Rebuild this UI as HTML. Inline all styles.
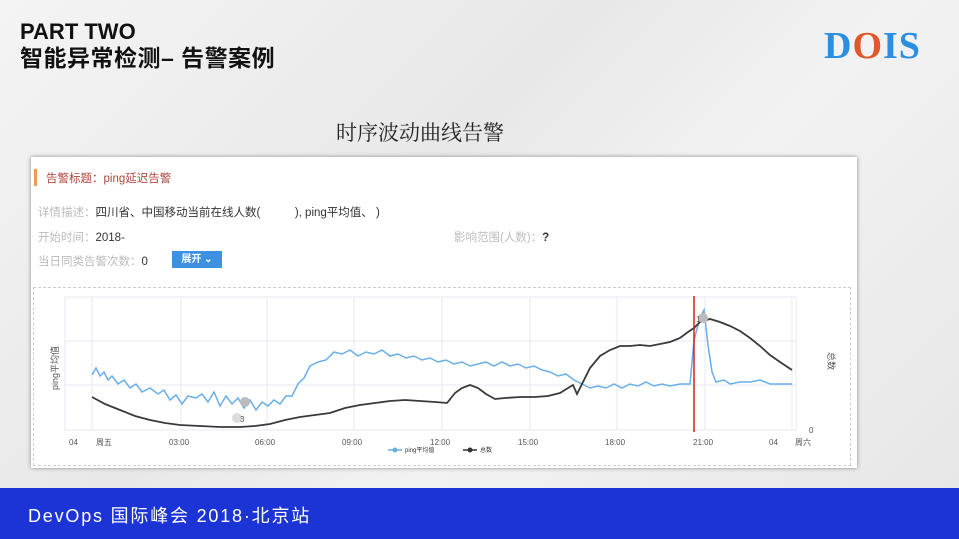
<html><head><style>
body{margin:0;width:959px;height:539px;overflow:hidden;background:linear-gradient(135deg,#f4f4f4,#e8e8e8 40%,#f2f2f2 60%,#e6e6e6);font-family:"Liberation Sans","Noto Sans CJK SC",sans-serif;position:relative}
.a{position:absolute}
</style></head><body>
<div class="a" style="left:20px;top:19px;font-size:22px;font-weight:bold;color:#111;line-height:26px">PART TWO<br><span style="font-size:23px;letter-spacing:0.5px">智能异常检测– 告警案例</span></div>
<div class="a" style="left:824px;top:24px;font-size:38px;font-weight:900;font-family:'Liberation Serif',serif;color:#2b8ee0;line-height:44px;letter-spacing:1px">D<span style="color:#e0572c">O</span>IS</div>
<div class="a" style="left:336px;top:117px;font-size:21px;color:#222;font-family:'Liberation Serif','Noto Serif CJK SC',serif">时序波动曲线告警</div>
<div class="a" style="left:31px;top:157px;width:826px;height:311px;background:#fff;box-shadow:0 0 4px #888">
<div class="a" style="left:3px;top:12px;width:3px;height:17px;background:#f29a4a"></div>
<div class="a" style="left:15px;top:13px;font-size:11.5px;color:#b0453c">告警标题：ping延迟告警</div>
<div class="a" style="left:7px;top:47px;font-size:11.5px;color:#bbb">详情描述：<span style="color:#333">四川省、中国移动当前在线人数(　　　), ping平均值、 )</span></div>
<div class="a" style="left:7px;top:72px;font-size:11.5px;color:#bbb">开始时间：<span style="color:#333">2018-</span></div>
<div class="a" style="left:423px;top:72px;font-size:11.5px;color:#bbb">影响范围(人数)：<span style="color:#333;font-weight:bold">?</span></div>
<div class="a" style="left:7px;top:96px;font-size:11.5px;color:#bbb">当日同类告警次数：<span style="color:#333">0</span></div>
<div class="a" style="left:141px;top:94px;width:50px;height:17px;background:#3e91e0;color:#fff;font-size:10px;line-height:17px;text-align:center;font-weight:bold">展开 ⌄</div>
<div class="a" style="left:2px;top:130px;width:816px;height:177px;border:1px dashed #ccc"></div>
</div>
<svg class="a" style="left:0;top:0" width="959" height="539">
<g stroke="#e4e8f0" stroke-width="1" fill="none">
<rect x="65" y="297" width="731" height="133"/>
<line x1="65" y1="341" x2="796" y2="341"/><line x1="65" y1="385" x2="796" y2="385"/>
<line x1="181" y1="297" x2="181" y2="430"/><line x1="267" y1="297" x2="267" y2="430"/><line x1="354" y1="297" x2="354" y2="430"/><line x1="442" y1="297" x2="442" y2="430"/><line x1="530" y1="297" x2="530" y2="430"/><line x1="617" y1="297" x2="617" y2="430"/><line x1="705" y1="297" x2="705" y2="430"/><line x1="92" y1="297" x2="92" y2="430"/><line x1="792" y1="297" x2="792" y2="430"/>
</g>
<polyline fill="none" stroke="#6aaee8" stroke-width="1.5" points="92,375 96,368 100,376 104,372 108,380 112,376 118,384 124,380 130,388 136,384 142,392 150,388 158,394 164,390 170,400 176,395 182,404 188,396 196,398 202,394 208,402 214,392 220,406 226,396 232,404 238,398 244,408 250,400 256,410 262,402 268,406 274,400 280,404 286,396 292,396 298,384 304,378 310,366 318,362 326,360 334,352 342,354 350,350 358,356 366,352 374,354 382,350 390,356 398,354 406,358 414,356 422,360 430,358 438,362 446,360 454,364 462,362 470,366 478,364 486,362 494,366 502,362 510,366 518,364 526,368 534,366 542,370 550,372 558,376 566,374 574,380 582,384 590,388 598,386 606,388 614,384 622,388 630,384 638,386 646,382 654,386 662,384 670,386 680,384 690,384 694,340 700,318 704,310 708,345 712,372 716,382 724,380 730,384 740,382 750,382 760,380 770,384 780,384 792,384"/>
<polyline fill="none" stroke="#3a3a3a" stroke-width="1.8" points="92,397 105,404 120,410 135,416 150,420 165,423 180,425 200,426 220,427 240,427 255,426 270,424 285,420 300,417 315,415 330,413 345,408 360,405 375,403 390,401 405,400 420,401 435,402 447,403 455,393 462,388 470,385 478,388 486,394 495,399 505,398 520,397 535,397 548,396 560,393 568,388 573,385 577,394 582,384 590,368 600,356 610,350 620,346 630,346 640,345 650,346 660,344 670,342 680,338 688,332 694,328 700,322 710,319 720,322 730,326 740,331 750,338 760,346 770,355 780,362 792,370"/>
<line x1="694" y1="296" x2="694" y2="432" stroke="#e01a1a" stroke-width="1.5"/>
<circle cx="703" cy="318" r="5" fill="#bbb"/><circle cx="245" cy="402" r="5" fill="#bbb"/><circle cx="237" cy="418" r="5" fill="#ddd"/>
<g font-size="8" fill="#555" font-family="Liberation Sans,Noto Sans CJK SC,sans-serif">
<text x="696" y="322">1</text><text x="240" y="422">3</text>
<text x="69" y="445">04</text><text x="96" y="445">周五</text><text x="169" y="445">03:00</text><text x="255" y="445">06:00</text><text x="342" y="445">09:00</text><text x="430" y="445">12:00</text><text x="518" y="445">15:00</text><text x="605" y="445">18:00</text><text x="693" y="445">21:00</text><text x="769" y="445">04</text><text x="795" y="445">周六</text>
<text x="809" y="433">0</text>
<text transform="translate(58,390) rotate(-90)" font-size="9">ping平均值</text>
<text transform="translate(828,352) rotate(90)" font-size="9">总数</text>
</g>
<line x1="388" y1="450" x2="402" y2="450" stroke="#6aaee8" stroke-width="1.5"/><circle cx="395" cy="450" r="2.5" fill="#6aaee8"/>
<text x="405" y="452" font-size="6" fill="#333">ping平均值</text>
<line x1="463" y1="450" x2="477" y2="450" stroke="#333" stroke-width="1.5"/><circle cx="470" cy="450" r="2.5" fill="#333"/>
<text x="480" y="452" font-size="6" fill="#333">总数</text>
</svg>
<div class="a" style="left:0;top:488px;width:959px;height:51px;background:#1c33d6"></div>
<div class="a" style="left:28px;top:502px;font-size:18px;color:#fff;letter-spacing:1.8px;white-space:nowrap">DevOps 国际峰会 2018·北京站</div>
</body></html>
